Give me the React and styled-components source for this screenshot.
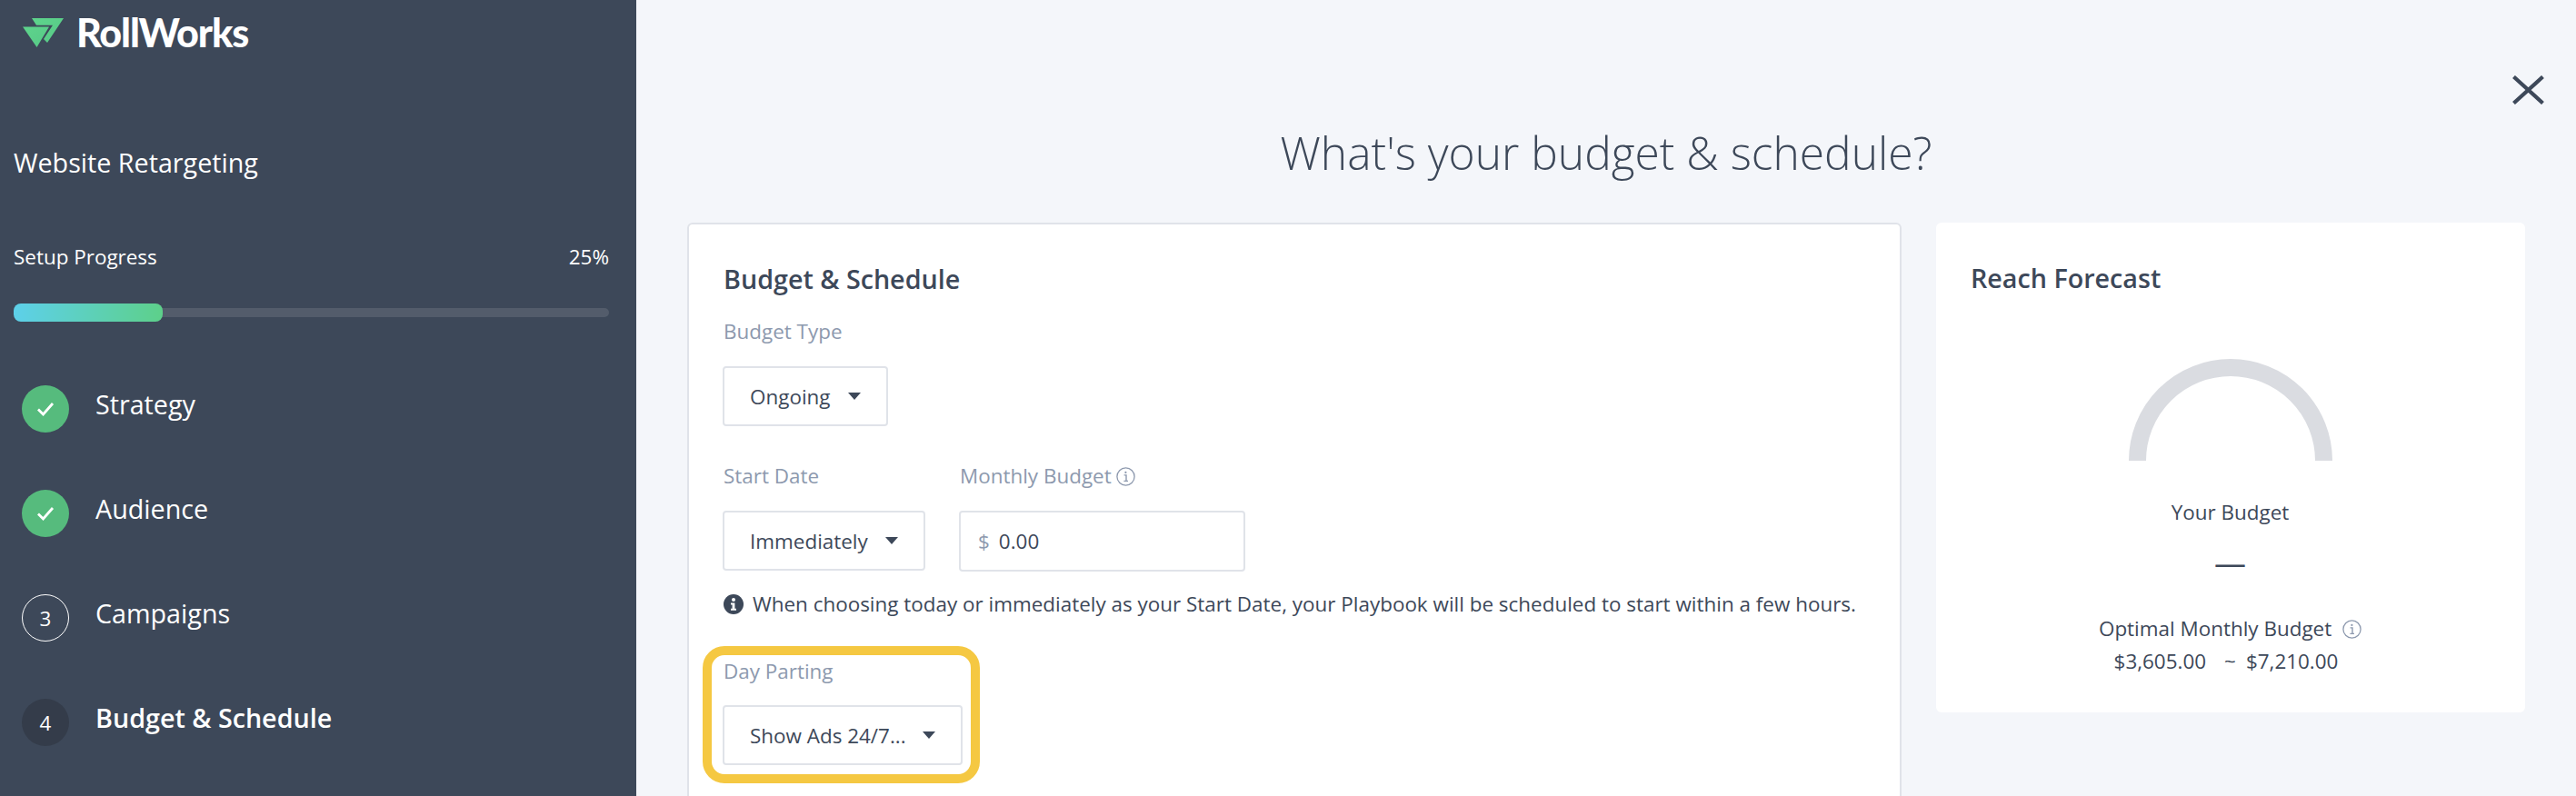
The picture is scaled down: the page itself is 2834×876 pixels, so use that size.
import React from "react";
import styled, { createGlobalStyle } from "styled-components";

const Global = createGlobalStyle`
  html, body { margin: 0; padding: 0; height: 100%; overflow: hidden; background: #f4f6fa; }
  * { box-sizing: border-box; }
  body { font-family: "Open Sans", "Liberation Sans", sans-serif; color: #3d4859; }
`;

const Page = styled.div`
  display: flex;
  width: 2834px;
  height: 876px;
  overflow: hidden;
`;
const Sidebar = styled.aside`
  flex: 0 0 700px;
  height: 876px;
  background: #3d4859;
  color: #fff;
  padding: 0 30px 0 15px;
  overflow: hidden;
`;
const Brand = styled.div`
  display: flex;
  align-items: center;
  height: 32px;
  margin: 20px 0 107px 10px;
  gap: 14px;
`;
const BrandName = styled.span`
  font-family: Lato, "Open Sans", sans-serif;
  font-weight: 900;
  font-size: 43px;
  line-height: 32px;
  letter-spacing: -1.100px;
  color: #fff;
`;
const CampaignTitle = styled.div`
  font-size: 28.7px;
  line-height: 40px;
  font-weight: 400;
`;
const ProgressHead = styled.div`
  display: flex;
  justify-content: space-between;
  margin-top: 68px;
  font-size: 22.45px;
  line-height: 32px;
  font-weight: 400;
`;
const Track = styled.div`
  display: flex;
  align-items: center;
  height: 20px;
  margin-top: 35px;
  position: relative;
`;
const TrackLine = styled.div`
  flex: 1;
  height: 10px;
  border-radius: 5px;
  background: #535c6b;
`;
const Fill = styled.div`
  position: absolute;
  left: 0;
  top: 0;
  height: 20px;
  width: 164px;
  border-radius: 8px;
  background: linear-gradient(90deg, #5dd0ea, #5dd08a);
`;
const Steps = styled.div`
  display: flex;
  flex-direction: column;
  gap: 63px;
  margin: 70px 0 0 9px;
`;
const Step = styled.div`
  display: flex;
  align-items: flex-start;
  gap: 29px;
  height: 52px;
`;
const Badge = styled.div`
  flex: 0 0 52px;
  width: 52px;
  height: 52px;
  border-radius: 50%;
  display: flex;
  align-items: center;
  justify-content: center;
  font-size: 22.45px;
  font-weight: ${p => (p.$kind === "active" ? 500 : 400)};
  color: #fff;
  background: ${p => (p.$kind === "done" ? "#56bb7d" : p.$kind === "active" ? "#343c4a" : "transparent")};
  border: ${p => (p.$kind === "todo" ? "1.5px solid #fff" : "none")};
`;
const StepLabel = styled.div`
  margin-top: 1px;
  font-size: 28.7px;
  line-height: 40px;
  font-weight: ${p => (p.$active ? 600 : 400)};
`;
const Main = styled.main`
  flex: 1;
  min-width: 0;
  padding-top: 83px;
`;
const CloseRow = styled.div`
  display: flex;
  justify-content: flex-end;
  padding-right: 35px;
  height: 32px;
`;
const Heading = styled.h1`
  margin: 19px 0 43px;
  text-align: center;
  font-size: 49.7px;
  line-height: 68px;
  font-weight: 300;
  color: #3d4859;
`;
const Columns = styled.div`
  display: flex;
  align-items: flex-start;
  gap: 38px;
  padding: 0 56px;
`;
const FormCard = styled.section`
  flex: 0 0 1336px;
  height: 720px;
  background: #fff;
  border: 2px solid #e0e3e9;
  border-radius: 6px;
  padding: 40px 38px;
`;
const ForecastCard = styled.section`
  flex: 0 0 648px;
  height: 539px;
  background: #fff;
  border-radius: 6px;
  padding: 41px 39px 0 38px;
`;
const CardTitle = styled.h2`
  margin: 0;
  font-size: 28.7px;
  line-height: 40px;
  font-weight: 600;
  color: #3d4859;
`;
const Label = styled.div`
  display: flex;
  align-items: center;
  gap: 5px;
  font-size: 22.45px;
  line-height: 32px;
  color: #8d99ae;
  font-weight: 400;
  height: 32px;
`;
const Field = styled.div`
  margin-top: ${p => p.$mt || 0}px;
  display: flex;
  flex-direction: column;
  gap: ${p => p.$gap || 22}px;
  align-items: flex-start;
`;
const FieldRow = styled.div`
  display: flex;
  gap: 38px;
  margin-top: 39px;
`;
const Select = styled.div`
  display: flex;
  align-items: center;
  justify-content: space-between;
  width: ${p => p.$w}px;
  height: 66px;
  padding: 0 28px;
  border: 2px solid #e0e3e9;
  border-radius: 4px;
  background: #fff;
  font-size: 22.45px;
  color: #3d4859;
  margin-left: -1px;
`;
const Caret = styled.span`
  width: 0;
  height: 0;
  border-left: 7px solid transparent;
  border-right: 7px solid transparent;
  border-top: 8px solid #3d4859;
`;
const MoneyInput = styled.div`
  display: flex;
  align-items: center;
  width: 315px;
  height: 67px;
  padding: 0 19px;
  gap: 10px;
  border: 2px solid #e0e3e9;
  border-radius: 4px;
  font-size: 22.45px;
  margin-left: -1px;
`;
const Dollar = styled.span`
  color: #8d99ae;
`;
const Note = styled.div`
  display: flex;
  align-items: center;
  gap: 10px;
  margin-top: 20px;
  font-size: 22.45px;
  line-height: 32px;
  white-space: nowrap;
  color: #3d4859;
`;
const Highlight = styled.div`
  width: 305px;
  margin: 30px 0 0 -23px;
  padding: 2px 0 10px 13px;
  border: 10px solid #f5c842;
  border-radius: 24px;
  background: #fff;
`;
const Gauge = styled.svg`
  display: block;
  margin: 69px auto 0;
`;
const Center = styled.div`
  text-align: center;
  font-size: ${p => p.$size || 22.45}px;
  line-height: ${p => p.$lh || 32}px;
  margin-top: ${p => p.$mt || 0}px;
  color: #3d4859;
  font-weight: 400;
  white-space: pre;
  display: flex;
  justify-content: center;
  align-items: center;
  gap: 6px;
`;
const RangeRow = styled(Center)`
  gap: 0;
  padding-right: 9px;
`;
const Tilde = styled.span`
  margin: 0 11px 0 20px;
`;

const InfoOutline = ({ color = "#8d99ae" }) => (
  <svg width="21" height="21" viewBox="0 0 21 21" fill="none">
    <circle cx="10.5" cy="10.5" r="9.6" stroke={color} strokeWidth="1.3" />
    <path d="M8.6 8.9h2.4v6.4M8.4 15.4h4.6" stroke={color} strokeWidth="1.4" />
    <circle cx="10.4" cy="5.9" r="1.1" fill={color} />
  </svg>
);
const InfoSolid = () => (
  <svg width="22" height="22" viewBox="0 0 22 22">
    <circle cx="11" cy="11" r="11" fill="#3d4859" />
    <circle cx="11" cy="6" r="2" fill="#fff" />
    <path d="M8 9.4h4.4v6.4h1.6v2H8v-2h1.6v-4.4H8z" fill="#fff" />
  </svg>
);
const Check = () => (
  <svg width="20" height="16" viewBox="0 0 20 16" fill="none">
    <path d="M2 8.5l5.5 5.5L18 2" stroke="#fff" strokeWidth="2.8" />
  </svg>
);
const Logo = () => (
  <svg width="45" height="32" viewBox="0 0 45 32">
    <defs>
      <linearGradient id="lg" x1="0" y1="0" x2="1" y2="1">
        <stop offset="0" stopColor="#5ed48c" />
        <stop offset="1" stopColor="#57c987" />
      </linearGradient>
    </defs>
    <path d="M0 9.500H29L15.500 32z" fill="url(#lg)" />
    <path d="M10 0H45L27 27L23 23L33 7.700H15z" fill="url(#lg)" />
  </svg>
);

export default function App() {
  return (
    <Page>
      <Global />
      <Sidebar>
        <Brand>
          <Logo />
          <BrandName>RollWorks</BrandName>
        </Brand>
        <CampaignTitle>Website Retargeting</CampaignTitle>
        <ProgressHead>
          <span>Setup Progress</span>
          <span>25%</span>
        </ProgressHead>
        <Track>
          <TrackLine />
          <Fill />
        </Track>
        <Steps>
          <Step>
            <Badge $kind="done"><Check /></Badge>
            <StepLabel>Strategy</StepLabel>
          </Step>
          <Step>
            <Badge $kind="done"><Check /></Badge>
            <StepLabel>Audience</StepLabel>
          </Step>
          <Step>
            <Badge $kind="todo">3</Badge>
            <StepLabel>Campaigns</StepLabel>
          </Step>
          <Step>
            <Badge $kind="active">4</Badge>
            <StepLabel $active>Budget &amp; Schedule</StepLabel>
          </Step>
        </Steps>
      </Sidebar>
      <Main>
        <CloseRow>
          <svg width="35" height="32" viewBox="0 0 35 32" fill="none">
            <path d="M1.500 1.500L33.500 30.500M33.500 1.500L1.500 30.500" stroke="#3d4859" strokeWidth="4.200" />
          </svg>
        </CloseRow>
        <Heading>What's your budget &amp; schedule?</Heading>
        <Columns>
          <FormCard>
            <CardTitle>Budget &amp; Schedule</CardTitle>
            <Field $mt={22}>
              <Label>Budget Type</Label>
              <Select $w={182}>Ongoing<Caret /></Select>
            </Field>
            <FieldRow>
              <Field>
                <Label>Start Date</Label>
                <Select $w={223}>Immediately<Caret /></Select>
              </Field>
              <Field>
                <Label>Monthly Budget <InfoOutline /></Label>
                <MoneyInput><Dollar>$</Dollar>0.00</MoneyInput>
              </Field>
            </FieldRow>
            <Note>
              <InfoSolid />
              When choosing today or immediately as your Start Date, your Playbook will be scheduled to start within a few hours.
            </Note>
            <Highlight>
              <Field $gap={21}>
                <Label>Day Parting</Label>
                <Select $w={264}>Show Ads 24/7...<Caret /></Select>
              </Field>
            </Highlight>
          </FormCard>
          <ForecastCard>
            <CardTitle>Reach Forecast</CardTitle>
            <Gauge width="224" height="112" viewBox="0 0 224 112" fill="none">
              <path d="M9.500 112a102.500 102.500 0 0 1 205 0" stroke="#dadce1" strokeWidth="19" />
            </Gauge>
            <Center $mt={41}>Your Budget</Center>
            <Center $mt={19} $size={35} $lh={40}>—</Center>
            <Center $mt={37}>Optimal Monthly Budget <InfoOutline /></Center>
            <RangeRow $mt={4}><span>$3,605.00</span><Tilde>~</Tilde><span>$7,210.00</span></RangeRow>
          </ForecastCard>
        </Columns>
      </Main>
    </Page>
  );
}
